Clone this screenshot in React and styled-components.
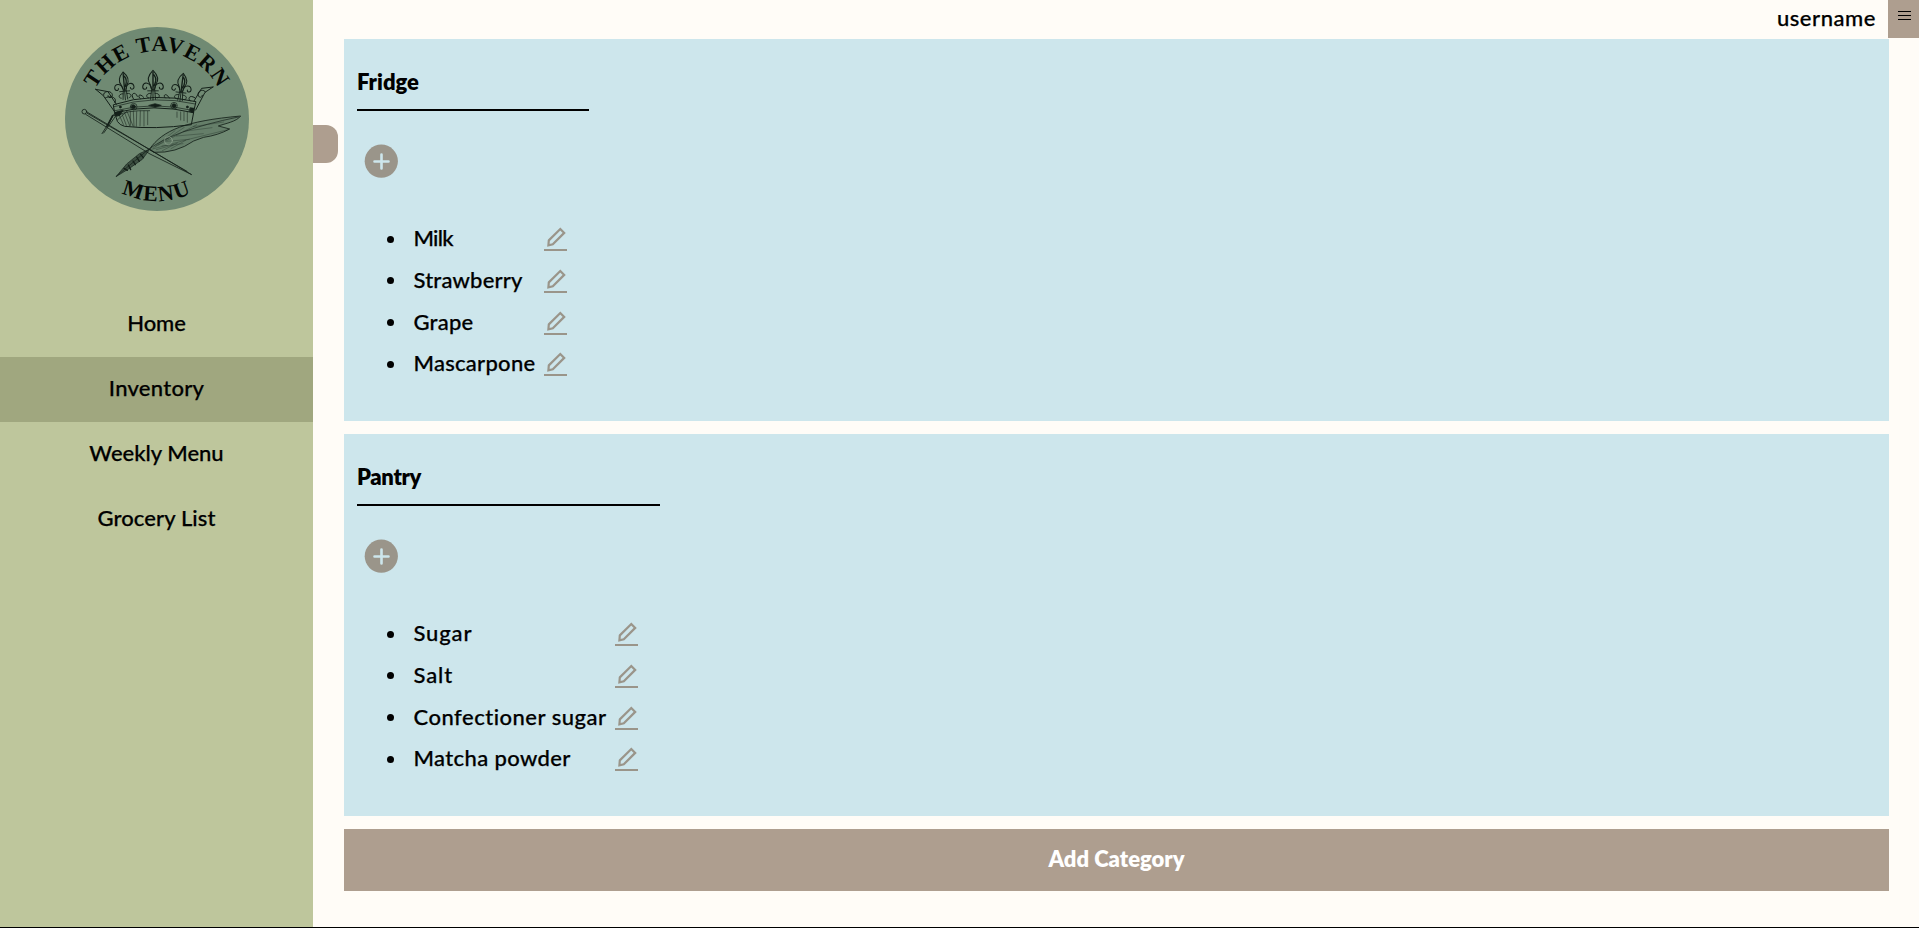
import React from 'react';
import styled, { createGlobalStyle } from 'styled-components';

const GlobalStyle = createGlobalStyle`
  * { box-sizing: border-box; }
  body { margin: 0; background: #fffcf7; color: #000; font: 500 22px/26px Lato, sans-serif; }
`;
const Page = styled.div`
  display: flex; height: 928px; overflow: hidden; border-bottom: 1px solid #000;
`;
const Sidebar = styled.aside`
  flex: 0 0 313px; background: #bec69c; display: flex; flex-direction: column;
`;
const Logo = styled.svg`
  display: block; width: 210px; height: 205px; margin: 15px 0 72px 50px;
`;
const Nav = styled.nav`display: flex; flex-direction: column;`;
const NavItem = styled.a`
  height: 65px; padding-bottom: 3px; display: flex; align-items: center; justify-content: center;
  background: ${p => (p.$active ? '#a0a77f' : 'transparent')};
`;
const Word = styled.span`
  letter-spacing: ${p => p.$track || 0}px; white-space: nowrap;
  -webkit-text-stroke: ${p => (p.$plain ? 0 : 0.25)}px currentColor;
`;
const Handle = styled.button`
  flex: 0 0 25px; height: 38px; margin: 125px 6px 0 0; padding: 0; border: 0;
  border-radius: 0 12px 12px 0; background: #ae9e8f;
`;
const Main = styled.main`flex: 1; display: flex; flex-direction: column;`;
const Header = styled.header`
  height: 39px; display: flex; justify-content: flex-end; align-items: flex-start; gap: 12px;
`;
const User = styled.div`padding-top: 5px;`;
const MenuButton = styled.button`
  width: 31px; height: 38px; border: 0; padding: 11px 8px 0 10px; background: #ae9e8f;
  display: flex; align-items: flex-start;
`;
const Content = styled.div`display: flex; flex-direction: column; gap: 13px; margin-right: 30px;`;
const Card = styled.section`height: 382px; padding: 30px 13px 0; background: #cde6ec;`;
const Title = styled.h2`
  margin: 0; width: ${p => p.$width}px; height: 42px; border-bottom: 2px solid #000;
  font-size: 22px; line-height: 26px; font-weight: 800;
`;
const AddButton = styled.button`
  display: block; width: 40px; height: 40px; margin: 30px 0 0 4px; padding: 0; border: 0; background: none;
  svg { display: block; }
`;
const List = styled.ul`list-style: none; margin: 37.4px 0 0; padding: 0 0 0 30px; width: ${p => p.$width}px;`;
const Item = styled.li`
  height: 41.7px; display: flex; align-items: center;
  &::before { content: ''; width: 7px; height: 7px; border-radius: 50%; background: #000; margin-right: 19.5px; }
  ${Word} { padding-bottom: 2px; }
  svg { margin-left: auto; }
`;
const AddCategory = styled.button`
  height: 62px; border: 0; padding: 0 0 3px; background: #ae9e8f; color: #fff;
  font: 800 22px/26px Lato, sans-serif;
`;
const Lettering = styled.text`
  font: 700 22px "Liberation Serif", serif; fill: #050805;
  letter-spacing: ${p => p.$track}px; text-anchor: middle;
`;

const Pencil = () => (
  <svg width="23" height="24" viewBox="0 0 23 24" fill="none" stroke="#9a958a">
    <path d="M4.8 13.4 16.3 2l3.9 3.9L8.8 17.3l-4.4 1.1Z" strokeWidth="2.2" />
    <path d="M0 23h23" strokeWidth="2" />
  </svg>
);

const categories = [
  { name: 'Fridge', width: 232, track: 0, items: [['Milk', -0.75], ['Strawberry', 0.2], ['Grape', 0.25], ['Mascarpone', 0.27]] },
  { name: 'Pantry', width: 303, track: -0.35, items: [['Sugar', 0.85], ['Salt', 0.9], ['Confectioner sugar', 0.5], ['Matcha powder', 0.38]] },
];
const links = [['Home', -0.1], ['Inventory', 0.27], ['Weekly Menu', 0], ['Grocery List', 0.12]];

const Fleur = ({ x, y, turn = 0, size = 1 }) => (
  <g transform={`translate(${x} ${y}) rotate(${turn}) scale(${size})`}>
    <path d="M0 0C-14 14-18 27-8 40L-3 55H4L8 40C18 27 13 13 0 0Z" strokeWidth="3" />
    <path d="M0 5V54M3 13C12 25 7 35 3 44" strokeWidth="4" />
    <path d="M-5 51C-7 34-26 31-29 45-30 55-18 57-18 48M5 51C7 34 26 31 29 45 30 55 18 57 18 48" strokeWidth="3" />
    <path d="M-15 58H15M-4 55-7 82M5 55 7 82M0 57V84M-6 65C-20 64-22 77-12 78M6 65C20 64 22 77 12 78" strokeWidth="2.5" />
  </g>
);

const TavernLogo = () => (
  <Logo viewBox="0 0 210 205" role="img" aria-label="The Tavern Menu">
    <defs>
      <path id="top-arc" d="M38 105A69 69 0 0 1 176 105" />
      <path id="bottom-arc" d="M25 104A82 82 0 0 0 189 104" />
    </defs>
    <circle cx="107" cy="104" r="92" fill="#708a73" />
    <Lettering $track={1.2}>
      <textPath href="#top-arc" startOffset="50%">THE TAVERN</textPath>
    </Lettering>
    <Lettering $track={1.6}>
      <textPath href="#bottom-arc" startOffset="50%">MENU</textPath>
    </Lettering>
    <g transform="scale(.33333)" fill="none" stroke="#142019" strokeLinecap="round" strokeLinejoin="round">
      <Fleur x={219} y={171} turn={-5} />
      <Fleur x={309} y={166} size={1.06} />
      <Fleur x={400} y={175} turn={7} />
      <g strokeWidth="3">
        <path d="M191 269Q312 230 438 260L430 293Q312 264 195 293Z" />
        <path d="M192 275Q312 238 436 267M195 287Q312 258 432 287" strokeWidth="2" />
        <path d="M137 223 174 230 199 268M137 223 160 242 195 292M161 241C158 227 184 225 187 239 188 250 173 251 174 242M166 249C181 240 203 247 195 263" />
        <path d="M489 216 455 220 432 258M489 216 465 232 437 285M466 231C463 222 444 225 444 238 445 250 458 249 457 241M434 248C420 238 411 250 421 258" />
        <path d="M250 251C239 234 257 228 262 244M358 249C347 230 337 242 346 249M281 247C268 232 261 244 271 251" />
        <path d="M199 293Q193 326 224 334 314 344 424 329L431 292" />
        <path d="M202 303Q224 285 299 287M203 314 232 288" strokeWidth="2" />
        <path d="M208 301 220 328M216 297 229 331M224 294 239 332M232 291 249 333M241 290V331M250 289 252 334M260 290 259 334M271 288 270 333M282 288V333M293 289V329M381 291V307M392 291V315M402 291V317M412 291V322" strokeWidth="2" opacity=".8" />
      </g>
      <g fill="#142019" strokeWidth="2">
        <circle cx="250" cy="275" r="6" /><circle cx="372" cy="272" r="6" />
        <path d="m297 271 18-5 19 5-18 6Z" />
        <path d="M196 292 220 285 209 302 193 302ZM421 278l12 2-3 14-12-5Z" />
        <circle cx="211" cy="276" r="3" /><circle cx="412" cy="276" r="3" />
      </g>
      <path d="M241 275a10 10 0 1 0 20 0 10 10 0 1 0-20 0M362 272a10 10 0 1 0 20 0 10 10 0 1 0-20 0" strokeWidth="2" />
      <g strokeWidth="2.5">
        <circle cx="103" cy="290" r="7" />
        <path d="M111 291 425 479 300 417 107 298M112 295 411 469M194 295 156 356M200 299 161 354M187 304 175 329" />
        <path d="M188 302 171 334" strokeWidth="5" />
      </g>
      <path d="M299 402C338 345 407 318 572 303 560 320 524 326 505 333L539 342Q504 361 461 367L431 378Q378 415 313 412Z" fill="#182a20" fillOpacity=".12" strokeWidth="2.5" />
      <path d="M199 484 291 407Q365 347 565 306" strokeWidth="2" />
      <path d="M304 403Q422 370 534 344M310 399 375 347M317 395 403 337M325 390 440 329M319 404 369 390M336 393 399 386M350 379 418 373M379 363 460 356M400 349 486 338M430 335 521 321M337 407 382 384M363 401 407 376" strokeWidth="1.7" opacity=".55" />
      <path d="M199 484 230 447 268 416 300 402 277 433 237 461Z" fill="#142019" fillOpacity=".55" strokeWidth="2" />
      <path d="M235 450 242 464M249 438 256 449M260 426 268 439M272 418 280 428M222 460 232 466" strokeWidth="4" />
      <circle cx="355" cy="377" r="12" stroke="#91a591" strokeWidth="2" />
    </g>
  </Logo>
);

export default function App() {
  return (
    <>
      <GlobalStyle />
      <Page>
        <Sidebar>
          <TavernLogo />
          <Nav>{links.map(([t, k], i) => <NavItem key={t} $active={i === 1}><Word $track={k}>{t}</Word></NavItem>)}</Nav>
        </Sidebar>
        <Handle aria-label="Toggle sidebar" />
        <Main>
          <Header>
            <User><Word $track={0.55}>username</Word></User>
            <MenuButton aria-label="Menu">
              <svg width="13" height="9" viewBox="0 0 13 9" stroke="#000"><path d="M0 .5h13M0 4.5h13M0 8.5h13" /></svg>
            </MenuButton>
          </Header>
          <Content>
            {categories.map(c => (
              <Card key={c.name}>
                <Title $width={c.width}><Word $plain $track={c.track}>{c.name}</Word></Title>
                <AddButton aria-label="Add item">
                  <svg width="40" height="40" viewBox="0 0 40 40">
                    <circle cx="20.3" cy="20.2" r="16.6" fill="#9a958a" />
                    <path d="M20.5 13.5v14M13.5 20.5h14" stroke="#cde6ec" strokeWidth="2.6" strokeLinecap="round" />
                  </svg>
                </AddButton>
                <List $width={c.width - 22}>
                  {c.items.map(([t, k]) => <Item key={t}><Word $track={k}>{t}</Word><Pencil /></Item>)}
                </List>
              </Card>
            ))}
            <AddCategory><Word $plain>Add Category</Word></AddCategory>
          </Content>
        </Main>
      </Page>
    </>
  );
}
